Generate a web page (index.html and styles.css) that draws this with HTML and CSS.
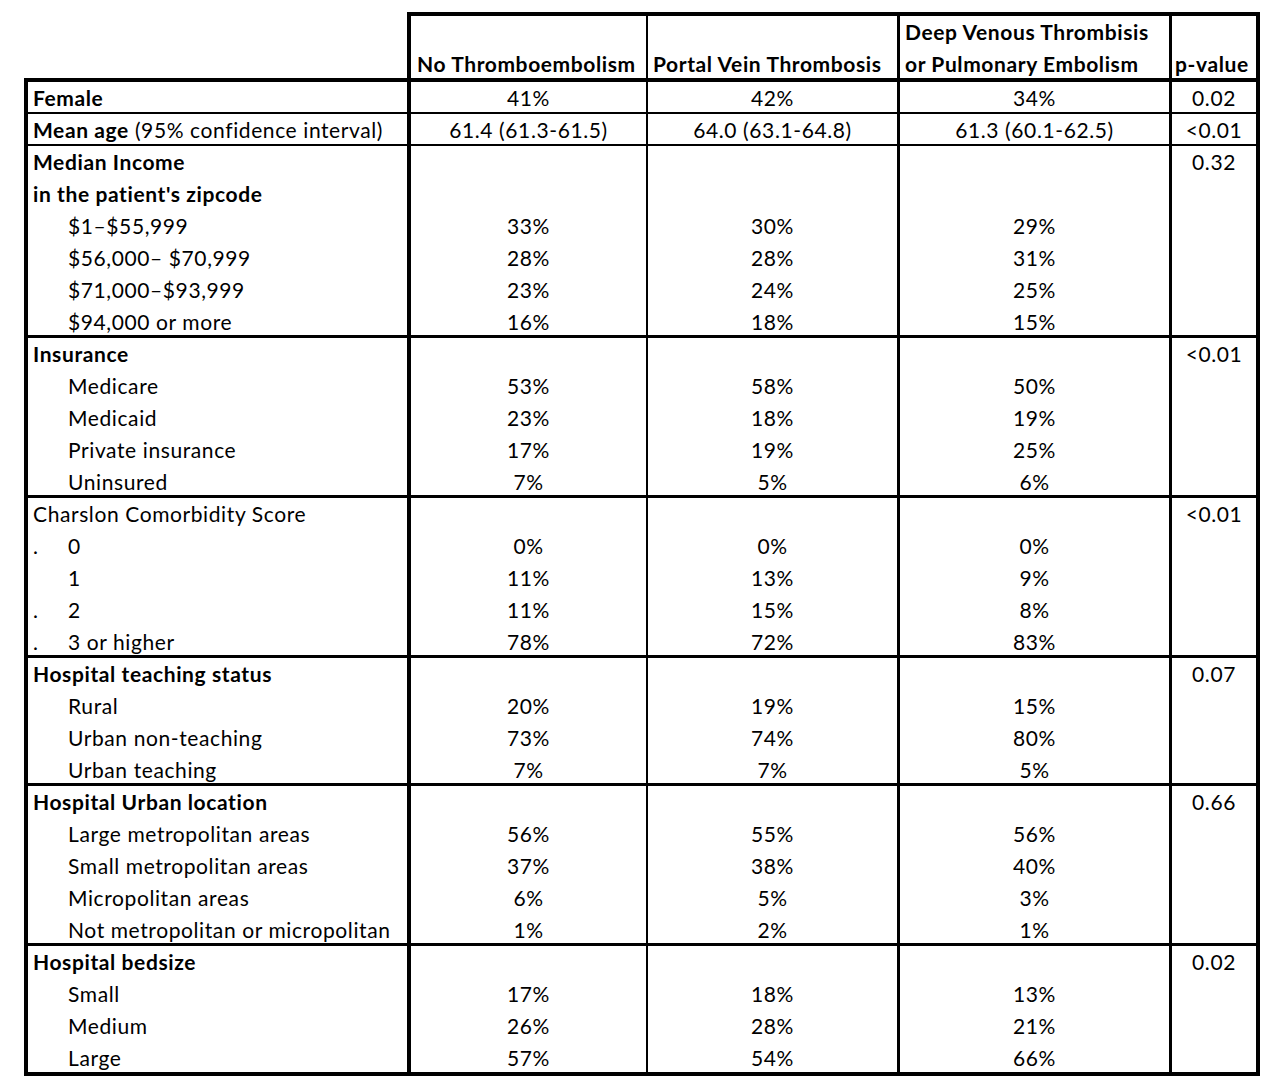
FILE: index.html
```html
<!DOCTYPE html>
<html lang="en">
<head>
<meta charset="utf-8">
<title>Patient characteristics by thromboembolism type</title>
<link rel="stylesheet" href="styles.css">
</head>
<body>
<div class="sheet">
  <!-- header -->
  <div class="cell hd blank"></div>
  <div class="cell hd c2"><div class="ln"></div><div class="ln b">No Thromboembolism</div></div>
  <div class="cell hd c3"><div class="ln"></div><div class="ln b">Portal Vein Thrombosis</div></div>
  <div class="cell hd c4"><div class="ln b">Deep Venous Thrombisis</div><div class="ln b">or Pulmonary Embolism</div></div>
  <div class="cell hd c5"><div class="ln"></div><div class="ln b">p-value</div></div>

  <!-- Female -->
  <div class="cell c1 thin"><div class="ln b">Female</div></div>
  <div class="cell c2 thin ctr"><div class="ln">41%</div></div>
  <div class="cell c3 thin ctr"><div class="ln">42%</div></div>
  <div class="cell c4 thin ctr"><div class="ln">34%</div></div>
  <div class="cell c5 thin ctr"><div class="ln">0.02</div></div>

  <!-- Mean age -->
  <div class="cell c1 thin"><div class="ln"><span class="b">Mean age</span> (95% confidence interval)</div></div>
  <div class="cell c2 thin ctr"><div class="ln">61.4 (61.3-61.5)</div></div>
  <div class="cell c3 thin ctr"><div class="ln">64.0 (63.1-64.8)</div></div>
  <div class="cell c4 thin ctr"><div class="ln">61.3 (60.1-62.5)</div></div>
  <div class="cell c5 thin ctr"><div class="ln">&lt;0.01</div></div>

  <!-- Median income -->
  <div class="cell c1 grp">
    <div class="ln b">Median Income</div>
    <div class="ln b">in the patient's zipcode</div>
    <div class="ln in">$1–$55,999</div>
    <div class="ln in">$56,000– $70,999</div>
    <div class="ln in">$71,000–$93,999</div>
    <div class="ln in">$94,000 or more</div>
  </div>
  <div class="cell c2 grp ctr"><div class="ln"></div><div class="ln"></div><div class="ln">33%</div><div class="ln">28%</div><div class="ln">23%</div><div class="ln">16%</div></div>
  <div class="cell c3 grp ctr"><div class="ln"></div><div class="ln"></div><div class="ln">30%</div><div class="ln">28%</div><div class="ln">24%</div><div class="ln">18%</div></div>
  <div class="cell c4 grp ctr"><div class="ln"></div><div class="ln"></div><div class="ln">29%</div><div class="ln">31%</div><div class="ln">25%</div><div class="ln">15%</div></div>
  <div class="cell c5 grp ctr"><div class="ln">0.32</div></div>

  <!-- Insurance -->
  <div class="cell c1 grp">
    <div class="ln b">Insurance</div>
    <div class="ln in">Medicare</div>
    <div class="ln in">Medicaid</div>
    <div class="ln in">Private insurance</div>
    <div class="ln in">Uninsured</div>
  </div>
  <div class="cell c2 grp ctr"><div class="ln"></div><div class="ln">53%</div><div class="ln">23%</div><div class="ln">17%</div><div class="ln">7%</div></div>
  <div class="cell c3 grp ctr"><div class="ln"></div><div class="ln">58%</div><div class="ln">18%</div><div class="ln">19%</div><div class="ln">5%</div></div>
  <div class="cell c4 grp ctr"><div class="ln"></div><div class="ln">50%</div><div class="ln">19%</div><div class="ln">25%</div><div class="ln">6%</div></div>
  <div class="cell c5 grp ctr"><div class="ln">&lt;0.01</div></div>

  <!-- Charlson -->
  <div class="cell c1 grp">
    <div class="ln">Charslon Comorbidity Score</div>
    <div class="ln dot"><span class="d">.</span><span>0</span></div>
    <div class="ln dot"><span class="d"></span><span>1</span></div>
    <div class="ln dot"><span class="d">.</span><span>2</span></div>
    <div class="ln dot"><span class="d">.</span><span>3 or higher</span></div>
  </div>
  <div class="cell c2 grp ctr"><div class="ln"></div><div class="ln">0%</div><div class="ln">11%</div><div class="ln">11%</div><div class="ln">78%</div></div>
  <div class="cell c3 grp ctr"><div class="ln"></div><div class="ln">0%</div><div class="ln">13%</div><div class="ln">15%</div><div class="ln">72%</div></div>
  <div class="cell c4 grp ctr"><div class="ln"></div><div class="ln">0%</div><div class="ln">9%</div><div class="ln">8%</div><div class="ln">83%</div></div>
  <div class="cell c5 grp ctr"><div class="ln">&lt;0.01</div></div>

  <!-- Teaching status -->
  <div class="cell c1 grp">
    <div class="ln b">Hospital teaching status</div>
    <div class="ln in">Rural</div>
    <div class="ln in">Urban non-teaching</div>
    <div class="ln in">Urban teaching</div>
  </div>
  <div class="cell c2 grp ctr"><div class="ln"></div><div class="ln">20%</div><div class="ln">73%</div><div class="ln">7%</div></div>
  <div class="cell c3 grp ctr"><div class="ln"></div><div class="ln">19%</div><div class="ln">74%</div><div class="ln">7%</div></div>
  <div class="cell c4 grp ctr"><div class="ln"></div><div class="ln">15%</div><div class="ln">80%</div><div class="ln">5%</div></div>
  <div class="cell c5 grp ctr"><div class="ln">0.07</div></div>

  <!-- Urban location -->
  <div class="cell c1 grp">
    <div class="ln b">Hospital Urban location</div>
    <div class="ln in">Large metropolitan areas</div>
    <div class="ln in">Small metropolitan areas</div>
    <div class="ln in">Micropolitan areas</div>
    <div class="ln in">Not metropolitan or micropolitan</div>
  </div>
  <div class="cell c2 grp ctr"><div class="ln"></div><div class="ln">56%</div><div class="ln">37%</div><div class="ln">6%</div><div class="ln">1%</div></div>
  <div class="cell c3 grp ctr"><div class="ln"></div><div class="ln">55%</div><div class="ln">38%</div><div class="ln">5%</div><div class="ln">2%</div></div>
  <div class="cell c4 grp ctr"><div class="ln"></div><div class="ln">56%</div><div class="ln">40%</div><div class="ln">3%</div><div class="ln">1%</div></div>
  <div class="cell c5 grp ctr"><div class="ln">0.66</div></div>

  <!-- Bedsize -->
  <div class="cell c1 last">
    <div class="ln b">Hospital bedsize</div>
    <div class="ln in">Small</div>
    <div class="ln in">Medium</div>
    <div class="ln in">Large</div>
  </div>
  <div class="cell c2 last ctr"><div class="ln"></div><div class="ln">17%</div><div class="ln">26%</div><div class="ln">57%</div></div>
  <div class="cell c3 last ctr"><div class="ln"></div><div class="ln">18%</div><div class="ln">28%</div><div class="ln">54%</div></div>
  <div class="cell c4 last ctr"><div class="ln"></div><div class="ln">13%</div><div class="ln">21%</div><div class="ln">66%</div></div>
  <div class="cell c5 last ctr"><div class="ln">0.02</div></div>
</div>
</body>
</html>
```

FILE: styles.css
```css
html, body {
  margin: 0;
  padding: 0;
  background: #ffffff;
}

body {
  font-family: Lato, "Liberation Sans", sans-serif;
  font-size: 21px;
  letter-spacing: 0.6px;
  color: #000000;
}

.sheet {
  display: grid;
  grid-template-columns: 383px 239px 251px 272px 91px;
  grid-template-rows: 70px 32px 32px 192px 160px 160px 128px 160px 130px;
  margin: 12px 0 0 24px;
  width: max-content;
}

.cell {
  box-sizing: border-box;
  min-width: 0;
  white-space: nowrap;
}

.ln {
  height: 32px;
  line-height: 32px;
}

.b {
  font-weight: 700;
}

.ctr {
  text-align: center;
}

/* header */
.hd {
  border-top: 4px solid #000;
  border-bottom: 4px solid #000;
}
.hd.blank {
  border-top: 0;
  padding-top: 4px;
}
.hd .ln {
  padding-left: 5px;
}

/* columns */
.c1 {
  border-left: 4px solid #000;
  padding-left: 5px;
}
.c2 {
  border-left: 4px solid #000;
}
.c3 {
  border-left: 2px solid #000;
}
.c4 {
  border-left: 3px solid #000;
}
.c5 {
  border-left: 3px solid #000;
  border-right: 4px solid #000;
}
.hd.c2 .ln { padding-left: 6px; }
.hd.c5 .ln { padding-left: 3px; }

/* row separators */
.thin {
  border-bottom: 2px solid #000;
}
.grp {
  border-bottom: 3px solid #000;
}
.last {
  border-bottom: 4px solid #000;
}

.in {
  padding-left: 35px;
}

.dot {
  display: flex;
}
.dot .d {
  width: 35px;
}
```
